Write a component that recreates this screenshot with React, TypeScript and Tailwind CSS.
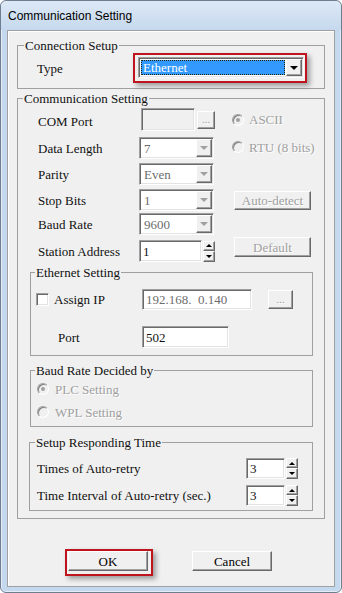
import type { ReactNode } from 'react'

// classic win32 bevels
const SUNKEN =
  'border border-t-[#a0a0a0] border-l-[#a0a0a0] border-r-white border-b-white shadow-[inset_1px_1px_0_#696969,inset_-1px_-1px_0_#e3e3e3]'
const RAISED =
  'border border-t-white border-l-white border-r-[#696969] border-b-[#696969] shadow-[inset_-1px_-1px_0_#a0a0a0] bg-[#f0f0f0]'
const DIM = 'text-[#a0a0a0] [text-shadow:1px_1px_0_#fff]'
const RED_BOX = 'border-2 border-[#c0141c] shadow-[3px_3px_5px_rgba(0,0,0,0.35)]'

function Group({ label, className, legendClass, children }: { label: string; className: string; legendClass: string; children: ReactNode }) {
  return (
    <fieldset className={`border border-[#a0a0a0] ${className}`}>
      <legend className={`px-[1px] ${legendClass}`}>{label}</legend>
      {children}
    </fieldset>
  )
}

function Down({ dim }: { dim?: boolean }) {
  return (
    <div
      className={`w-0 h-0 border-l-[4px] border-r-[4px] border-t-[4px] border-l-transparent border-r-transparent ${
        dim ? 'border-t-[#a0a0a0]' : 'border-t-black'
      }`}
    />
  )
}

function Combo({ value }: { value: string }) {
  return (
    <div className={`flex w-[75px] h-[22px] bg-white p-[1px] ${SUNKEN}`}>
      <div className="flex-1 flex items-center pl-[3px] text-[#6d6d6d]">{value}</div>
      <div className={`w-[16px] flex items-center justify-center ${RAISED}`}>
        <Down dim />
      </div>
    </div>
  )
}

function Spin() {
  return (
    <div className="flex flex-col w-[12px] h-[21px]">
      <div className={`h-[10px] flex items-center justify-center ${RAISED}`}>
        <div className="w-0 h-0 border-l-[3px] border-r-[3px] border-b-[3px] border-l-transparent border-r-transparent border-b-black" />
      </div>
      <div className={`h-[11px] flex items-center justify-center ${RAISED}`}>
        <div className="w-0 h-0 border-l-[3px] border-r-[3px] border-t-[3px] border-l-transparent border-r-transparent border-t-black" />
      </div>
    </div>
  )
}

function Radio({ checked }: { checked?: boolean }) {
  return (
    <div className="w-[12px] h-[12px] rounded-full border border-t-[#a0a0a0] border-l-[#a0a0a0] border-r-white border-b-white bg-[#f0f0f0] flex items-center justify-center shadow-[inset_1px_1px_0_#808080]">
      {checked && <div className="w-[4px] h-[4px] rounded-full bg-[#a0a0a0]" />}
    </div>
  )
}

function Btn({ label, className, dim }: { label: string; className: string; dim?: boolean }) {
  return (
    <div className={`flex items-center justify-center ${RAISED} ${dim ? DIM : 'text-black'} ${className}`}>{label}</div>
  )
}

export default function App() {
  return (
    <div className="w-[342px] h-[593px] rounded-[6px] border border-[#6f7e8f] bg-[#c4d8ee] shadow-[inset_0_0_0_1px_rgba(255,255,255,0.55)] flex flex-col px-[6px] pb-[5px]">
      <div className="h-[29px] -mx-[6px] px-[7px] flex items-center rounded-t-[6px] bg-gradient-to-b from-[#dce8f5] to-[#c6d9ee] font-['Liberation_Sans',sans-serif] text-[12px] text-black">
        Communication Setting
      </div>

      <div className="flex-1 flex flex-col bg-[#f0f0f0] border border-[#a0a0a0] shadow-[inset_1px_1px_0_#fff] font-['Liberation_Serif',serif] text-[13px] leading-[15px] text-[#111]">
        <Group label="Connection Setup" className="mt-[7px] ml-[9px] w-[308px] pb-[5px]" legendClass="ml-[6px]">
          <div className="flex items-center h-[30px]">
            <span className="pl-[19px] w-[115px]">Type</span>
            <div className={`w-[174px] h-[30px] pl-[3px] pt-[2px] ${RED_BOX}`}>
              <div className={`flex w-[166px] h-[21px] bg-white p-[1px] ${SUNKEN}`}>
                <div className="flex-1 m-[1px] bg-[#3399ff] border border-dotted border-[#2b2400] text-white flex items-center pl-[1px]">
                  Ethernet
                </div>
                <div className={`w-[16px] flex items-center justify-center ${RAISED}`}>
                  <Down />
                </div>
              </div>
            </div>
          </div>
        </Group>

        <Group label="Communication Setting" className="mt-[2px] ml-[9px] w-[308px] pb-[7px]" legendClass="ml-[5px]">
          <div className="flex items-center h-[23px] mt-[2px]">
            <span className="pl-[20px] w-[121px] pt-[4px]">COM Port</span>
            <div className={`ml-[2px] w-[54px] h-[23px] bg-[#f0f0f0] ${SUNKEN}`} />
            <Btn label="..." className="ml-[2px] w-[18px] h-[18px] text-[11px]" dim />
            <div className="ml-[17px] flex items-center gap-[5px]">
              <Radio checked />
              <span className={DIM}>ASCII</span>
            </div>
          </div>

          <div className="flex items-center h-[22px] mt-[6px]">
            <span className="pl-[20px] w-[121px]">Data Length</span>
            <Combo value="7" />
            <div className="ml-[18px] flex items-center gap-[5px] -mt-[2px]">
              <Radio />
              <span className={DIM}>RTU (8 bits)</span>
            </div>
          </div>

          <div className="flex items-center h-[22px] mt-[4px]">
            <span className="pl-[20px] w-[121px]">Parity</span>
            <Combo value="Even" />
          </div>

          <div className="flex items-center h-[22px] mt-[4px]">
            <span className="pl-[20px] w-[121px]">Stop Bits</span>
            <Combo value="1" />
            <Btn label="Auto-detect" className="ml-[20px] w-[77px] h-[19px]" dim />
          </div>

          <div className="flex items-center h-[22px] mt-[2px]">
            <span className="pl-[20px] w-[121px]">Baud Rate</span>
            <Combo value="9600" />
          </div>

          <div className="flex items-center h-[22px] mt-[5px]">
            <span className="pl-[20px] w-[121px]">Station Address</span>
            <div className={`w-[63px] h-[22px] bg-white pl-[3px] flex items-center ${SUNKEN}`}>1</div>
            <div className="ml-[1px]">
              <Spin />
            </div>
            <Btn label="Default" className="ml-[19px] w-[77px] h-[20px] self-start -mt-[3px]" dim />
          </div>

          <Group label="Ethernet Setting" className="mt-[3px] ml-[12px] w-[283px] pb-[7px]" legendClass="ml-[4px]">
            <div className="flex items-center h-[21px] mt-[9px]">
              <div className={`ml-[5px] w-[13px] h-[13px] bg-white ${SUNKEN}`} />
              <span className="ml-[5px] w-[88px]">Assign IP</span>
              <div className={`w-[110px] h-[21px] bg-white pl-[3px] flex items-center whitespace-pre text-[#6d6d6d] ${SUNKEN}`}>
                192.168.  0.140
              </div>
              <Btn label="..." className="ml-[16px] w-[25px] h-[19px] text-[11px]" dim />
            </div>
            <div className="flex items-center h-[22px] mt-[16px]">
              <span className="pl-[27px] w-[111px]">Port</span>
              <div className={`w-[87px] h-[22px] bg-white pl-[3px] flex items-center ${SUNKEN}`}>502</div>
            </div>
          </Group>

          <Group label="Baud Rate Decided by" className="mt-[7px] ml-[12px] w-[283px] pb-[5px]" legendClass="ml-[4px]">
            <div className="flex items-center h-[18px] mt-[2px] pl-[6px] gap-[6px]">
              <Radio checked />
              <span className={DIM}>PLC Setting</span>
            </div>
            <div className="flex items-center h-[18px] mt-[5px] pl-[6px] gap-[6px]">
              <Radio />
              <span className={DIM}>WPL Setting</span>
            </div>
          </Group>

          <Group label="Setup Responding Time" className="mt-[8px] ml-[11px] w-[284px] pb-[4px]" legendClass="ml-[5px]">
            <div className="flex items-center h-[21px] mt-[8px]">
              <span className="pl-[7px] w-[216px]">Times of Auto-retry</span>
              <div className={`w-[39px] h-[21px] bg-white pl-[3px] flex items-center ${SUNKEN}`}>3</div>
              <div className="ml-[1px]">
                <Spin />
              </div>
            </div>
            <div className="flex items-center h-[21px] mt-[6px]">
              <span className="pl-[7px] w-[216px]">Time Interval of Auto-retry (sec.)</span>
              <div className={`w-[39px] h-[21px] bg-white pl-[3px] flex items-center ${SUNKEN}`}>3</div>
              <div className="ml-[1px]">
                <Spin />
              </div>
            </div>
          </Group>
        </Group>

        <div className="flex items-start mt-[30px]">
          <div className={`ml-[57px] w-[88px] h-[27px] pl-[1px] ${RED_BOX}`}>
            <Btn label="OK" className="w-[80px] h-[20px]" />
          </div>
          <Btn label="Cancel" className="ml-[39px] mt-[2px] w-[80px] h-[20px]" />
        </div>
      </div>
    </div>
  )
}
